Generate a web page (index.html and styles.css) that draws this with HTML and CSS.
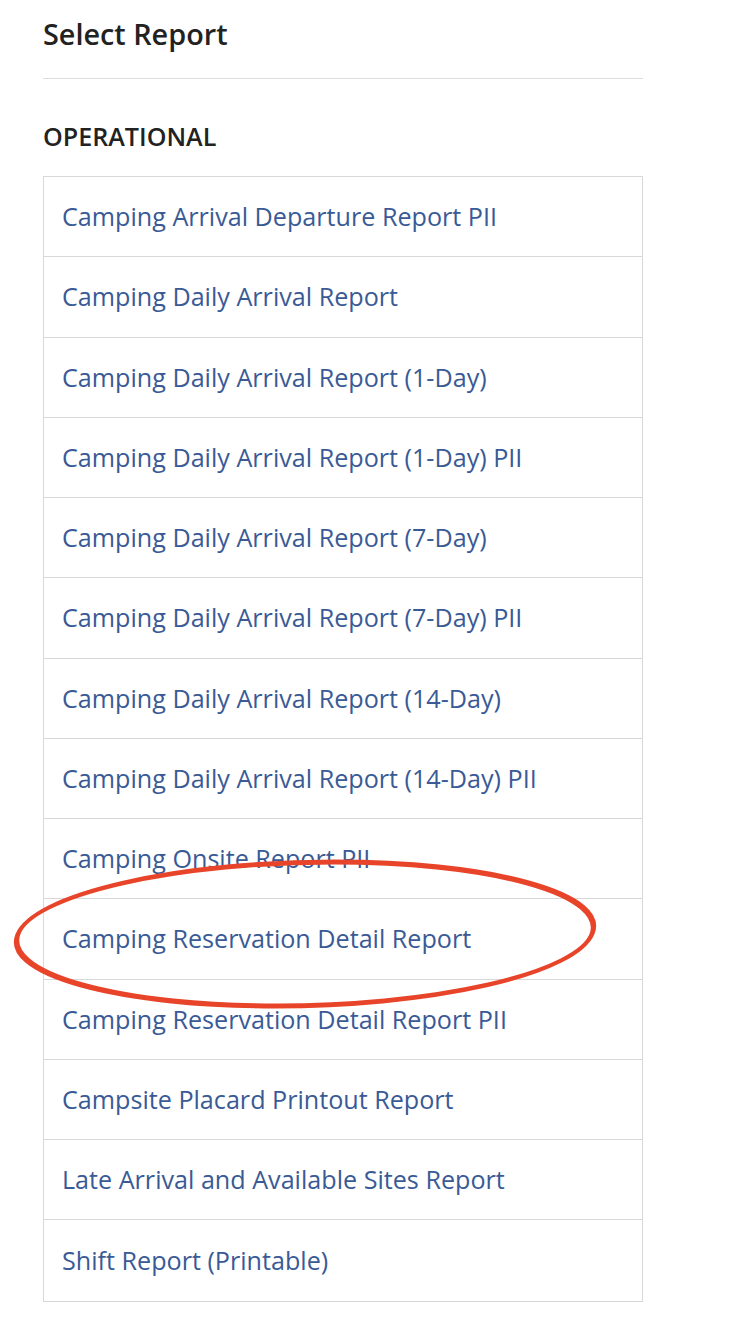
FILE: index.html
```html
<!DOCTYPE html>
<html lang="en">
<head>
<meta charset="utf-8">
<title>Select Report</title>
<link rel="stylesheet" href="styles.css">
</head>
<body>
<div class="panel">
  <h1 class="title">Select Report</h1>
  <h2 class="group">OPERATIONAL</h2>
  <ul class="reports">
    <li class="report"><a href="#">Camping Arrival Departure Report PII</a></li>
    <li class="report"><a href="#">Camping Daily Arrival Report</a></li>
    <li class="report"><a href="#">Camping Daily Arrival Report (1-Day)</a></li>
    <li class="report"><a href="#">Camping Daily Arrival Report (1-Day) PII</a></li>
    <li class="report"><a href="#">Camping Daily Arrival Report (7-Day)</a></li>
    <li class="report"><a href="#">Camping Daily Arrival Report (7-Day) PII</a></li>
    <li class="report"><a href="#">Camping Daily Arrival Report (14-Day)</a></li>
    <li class="report"><a href="#">Camping Daily Arrival Report (14-Day) PII</a></li>
    <li class="report"><a href="#">Camping Onsite Report PII</a></li>
    <li class="report"><a href="#">Camping Reservation Detail Report</a></li>
    <li class="report"><a href="#">Camping Reservation Detail Report PII</a></li>
    <li class="report"><a href="#">Campsite Placard Printout Report</a></li>
    <li class="report"><a href="#">Late Arrival and Available Sites Report</a></li>
    <li class="report"><a href="#">Shift Report (Printable)</a></li>
  </ul>
</div>
<svg class="annotation" width="740" height="1332" viewBox="0 0 740 1332" aria-hidden="true">
  <ellipse cx="0" cy="0" rx="287" ry="72" fill="none" stroke="#e8442a" stroke-width="5" transform="translate(305 934) skewX(-22)"/>
</svg>
</body>
</html>
```
FILE: styles.css
```css
html, body {
  margin: 0;
  padding: 0;
  background: #ffffff;
}

body {
  font-family: "Open Sans", "Noto Sans", "Liberation Sans", sans-serif;
  position: relative;
  width: 740px;
  height: 1332px;
  overflow: hidden;
}

.panel {
  width: 600px;
  padding: 15px 0 0 43px;
}

.title {
  margin: 0;
  font-size: 28.8px;
  font-weight: 600;
  line-height: 38px;
  color: #222222;
  padding-bottom: 25px;
  border-bottom: 1px solid #dddddd;
}

.group {
  margin: 41px 0 23px 0;
  font-size: 25.1px;
  font-weight: 600;
  line-height: 33px;
  color: #222222;
}

.reports {
  list-style: none;
  margin: 0;
  padding: 0;
  border: 1px solid #d8d8d8;
}

.report {
  box-sizing: border-box;
  height: 80.25px;
  display: flex;
  align-items: center;
  padding-left: 18px;
  border-bottom: 1px solid #d8d8d8;
}

.report:last-child {
  border-bottom: none;
}

.report a {
  font-size: 25.15px;
  line-height: 33px;
  color: #3a5a96;
  text-decoration: none;
}

.annotation {
  position: absolute;
  top: 0;
  left: 0;
  pointer-events: none;
}
```
